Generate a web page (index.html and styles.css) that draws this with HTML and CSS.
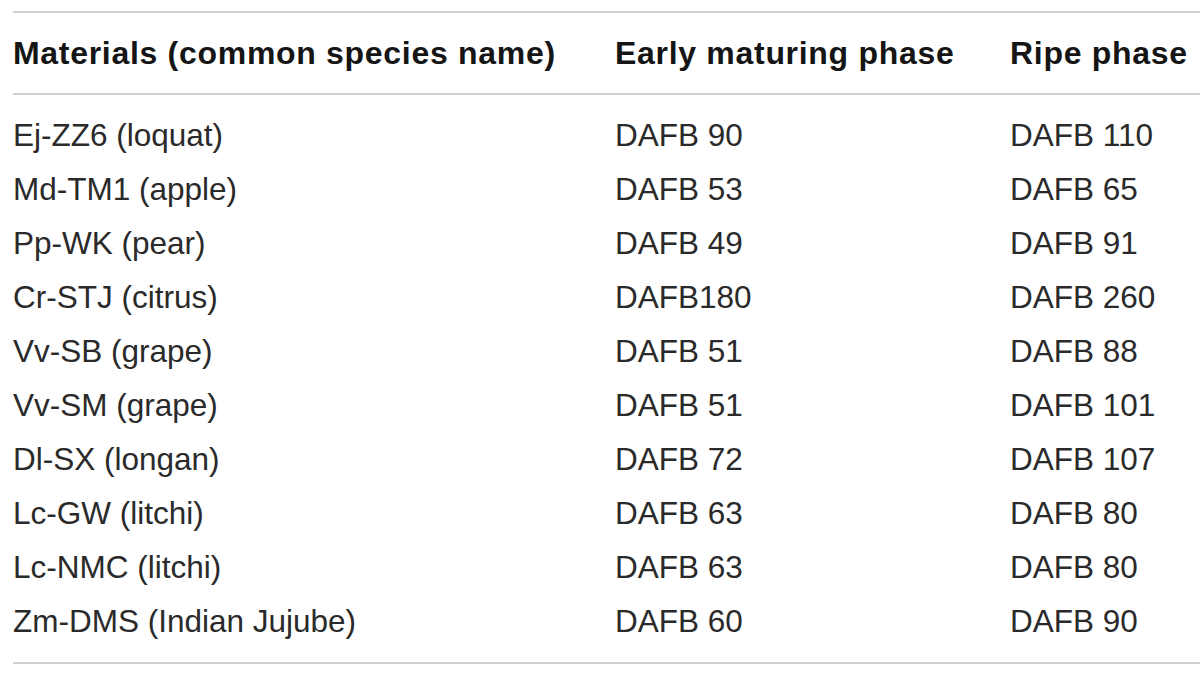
FILE: index.html
```html
<!DOCTYPE html>
<html>
<head>
<meta charset="utf-8">
<link rel="stylesheet" href="styles.css">
</head>
<body>
<div class="table">
  <div class="row head">
    <div class="c1">Materials (common species name)</div>
    <div class="c2">Early maturing phase</div>
    <div class="c3">Ripe phase</div>
  </div>
  <div class="body">
    <div class="row"><div class="c1">Ej-ZZ6 (loquat)</div><div class="c2">DAFB 90</div><div class="c3">DAFB 110</div></div>
    <div class="row"><div class="c1">Md-TM1 (apple)</div><div class="c2">DAFB 53</div><div class="c3">DAFB 65</div></div>
    <div class="row"><div class="c1">Pp-WK (pear)</div><div class="c2">DAFB 49</div><div class="c3">DAFB 91</div></div>
    <div class="row"><div class="c1">Cr-STJ (citrus)</div><div class="c2">DAFB180</div><div class="c3">DAFB 260</div></div>
    <div class="row"><div class="c1">Vv-SB (grape)</div><div class="c2">DAFB 51</div><div class="c3">DAFB 88</div></div>
    <div class="row"><div class="c1">Vv-SM (grape)</div><div class="c2">DAFB 51</div><div class="c3">DAFB 101</div></div>
    <div class="row"><div class="c1">Dl-SX (longan)</div><div class="c2">DAFB 72</div><div class="c3">DAFB 107</div></div>
    <div class="row"><div class="c1">Lc-GW (litchi)</div><div class="c2">DAFB 63</div><div class="c3">DAFB 80</div></div>
    <div class="row"><div class="c1">Lc-NMC (litchi)</div><div class="c2">DAFB 63</div><div class="c3">DAFB 80</div></div>
    <div class="row"><div class="c1">Zm-DMS (Indian Jujube)</div><div class="c2">DAFB 60</div><div class="c3">DAFB 90</div></div>
  </div>
</div>
</body>
</html>
```
FILE: styles.css
```css
html, body {
  margin: 0;
  padding: 0;
  background: #fff;
}
body {
  font-family: "Liberation Sans", Arial, sans-serif;
  font-size: 31.5px;
  color: #2a2a2a;
  padding-top: 11px;
  padding-left: 13px;
  overflow: hidden;
}
.table {
  width: 1187px;
  border-top: 2px solid #d0d0d0;
  border-bottom: 2px solid #d0d0d0;
}
.row {
  display: grid;
  grid-template-columns: 602px 395px 1fr;
  align-items: center;
  height: 54px;
  white-space: nowrap;
}
.head {
  height: 80px;
  font-size: 32px;
  font-weight: bold;
  letter-spacing: 0.7px;
  color: #151515;
  border-bottom: 2px solid #d0d0d0;
}
.body {
  padding-top: 13px;
  padding-bottom: 14px;
}
```
